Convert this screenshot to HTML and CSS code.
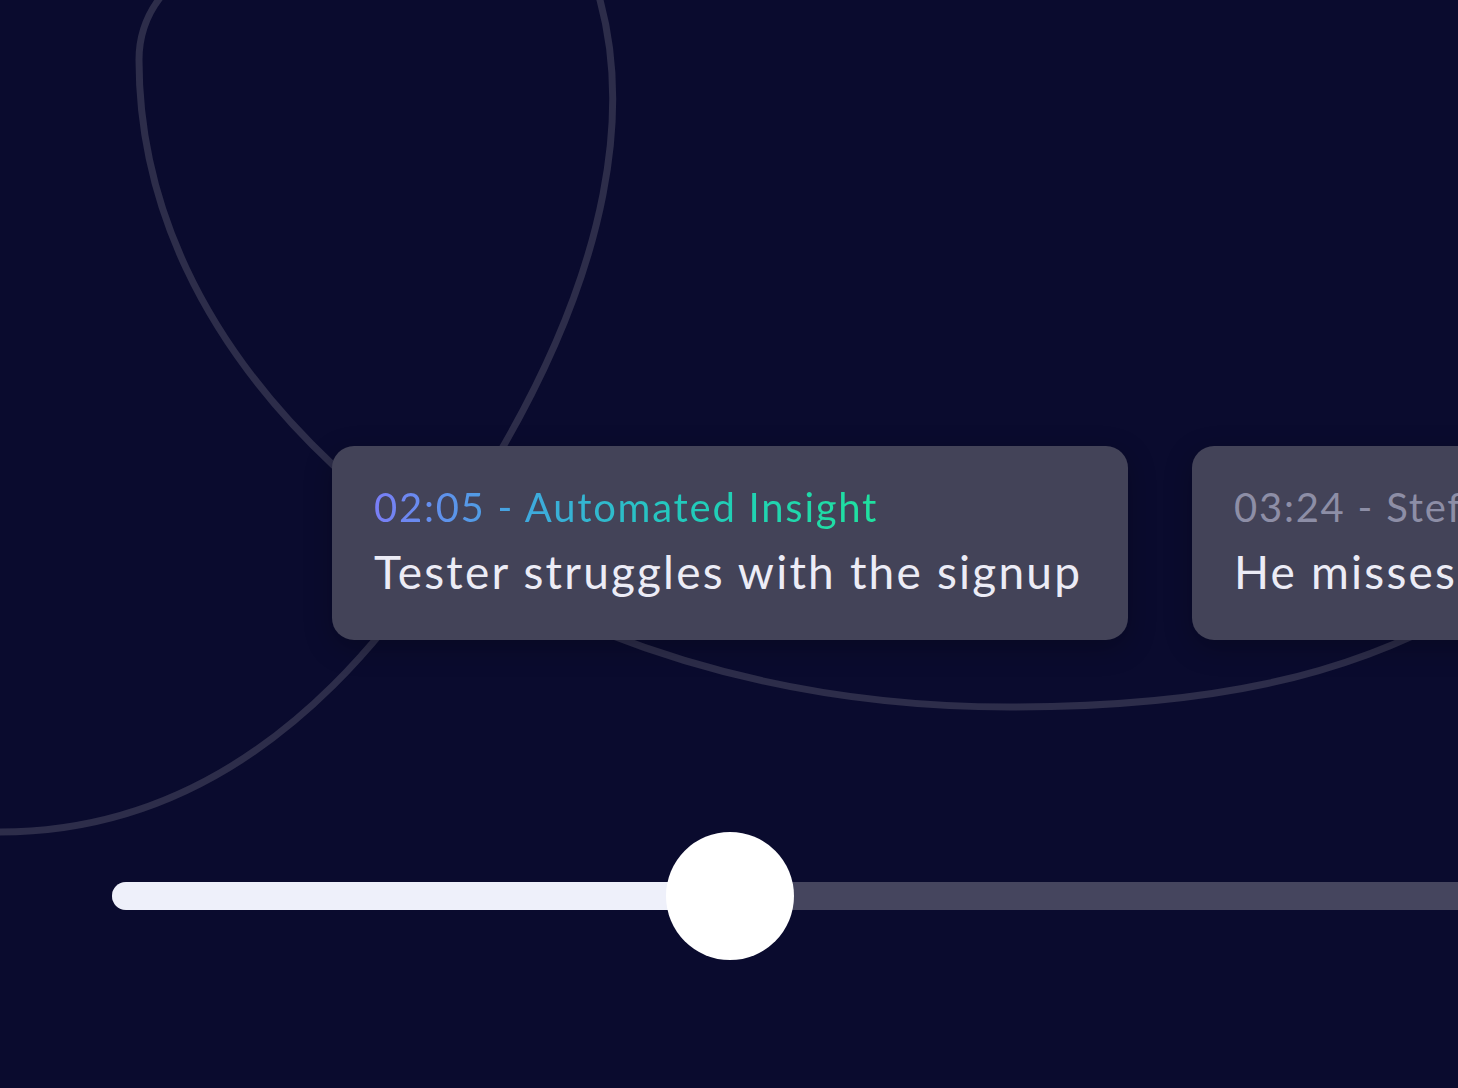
FILE: index.html
```html
<!DOCTYPE html>
<html lang="en">
<head>
<meta charset="utf-8">
<title>Insights timeline</title>
<link rel="stylesheet" href="styles.css">
</head>
<body>
<div class="stage">
  <svg class="curve" width="1458" height="1088" viewBox="0 0 1458 1088" aria-hidden="true">
    <path d="M 1480 600 C 1350 680 1200 707 1010 707 C 700 707 466 590 333 465 C 200 340 139 200 139 60 C 139 -120 570 -110 600 0 C 630 110 610 260 504 445 C 450 540 300 832 0 832 L -40 832" />
  </svg>
  <main class="content">
    <section class="cards">
      <article class="card">
        <div class="meta"><span class="gradient">02:05 - Automated Insight</span></div>
        <div class="title">Tester struggles with the signup</div>
      </article>
      <article class="card">
        <div class="meta muted">03:24 - Stefanie</div>
        <div class="title">He misses the button</div>
      </article>
    </section>
    <div class="slider">
      <div class="fill"></div>
      <div class="knob"></div>
    </div>
  </main>
</div>
</body>
</html>
```
FILE: styles.css
```css
html, body {
  margin: 0;
  padding: 0;
  background: #0a0b2e;
}

body {
  font-family: "Lato", "Noto Sans", sans-serif;
  overflow: hidden;
}

.stage {
  position: relative;
  width: 1458px;
  height: 1088px;
  overflow: hidden;
  background: #0a0b2e;
}

.curve {
  position: absolute;
  left: 0;
  top: 0;
}

.curve path {
  fill: none;
  stroke: #2d2d4a;
  stroke-width: 7;
  stroke-linecap: round;
}

.content {
  position: relative;
  padding-top: 446px;
}

.cards {
  display: flex;
  gap: 64px;
  padding-left: 332px;
}

.card {
  flex: 0 0 auto;
  width: 796px;
  height: 194px;
  box-sizing: border-box;
  padding: 37px 42px 0;
  background: #434358;
  border-radius: 22px;
  box-shadow: 0 8px 28px rgba(0, 0, 0, 0.25);
  white-space: nowrap;
}

.meta {
  font-size: 40px;
  line-height: 48px;
  letter-spacing: 1.75px;
  color: #8d8ea6;
}

.gradient {
  display: inline-block;
  background: linear-gradient(90deg, #7a7ef6 0%, #3fa9de 30%, #22c9bd 60%, #1fe29f 100%);
  -webkit-background-clip: text;
  background-clip: text;
  color: transparent;
}

.title {
  margin-top: 13px;
  font-size: 46px;
  line-height: 56px;
  letter-spacing: 2.2px;
  color: #ececf6;
}

.slider {
  position: relative;
  margin-top: 242px;
  margin-left: 112px;
  margin-right: -100px;
  height: 28px;
  border-radius: 14px;
  background: #45455e;
}

.fill {
  width: 618px;
  height: 28px;
  border-radius: 14px;
  background: #eef0fa;
}

.knob {
  position: absolute;
  left: 554px;
  top: -50px;
  width: 128px;
  height: 128px;
  border-radius: 50%;
  background: #ffffff;
}
```
